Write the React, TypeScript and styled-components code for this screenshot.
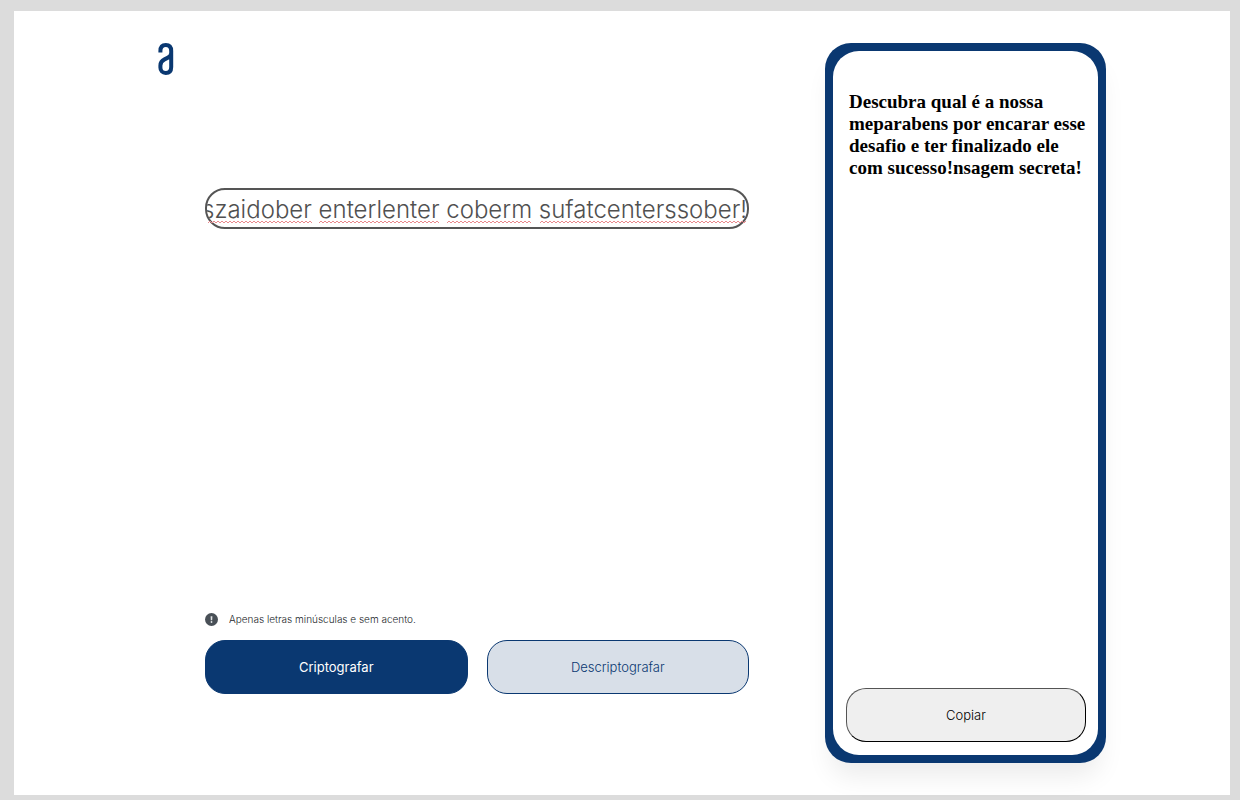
import React, { useLayoutEffect, useRef, useState } from "react";
import styled, { createGlobalStyle } from "styled-components";

const navy = "#0a3871";
const grey = "#495057";

const GlobalStyle = createGlobalStyle`
  *, *::before, *::after { box-sizing: border-box; }
  body {
    margin: 0;
    background: #dcdcdc;
    font-family: Inter, "Liberation Sans", sans-serif;
  }
`;

const Frame = styled.div`
  display: flex;
  min-height: 100vh;
  padding: 11px 10px 5px 14px;
`;

const Page = styled.div`
  flex: 1;
  display: flex;
  align-items: stretch;
  padding: 32px 124px 32px 144px;
  background: #fff;
`;

const LogoLink = styled.a`
  flex: none;
  width: 16px;
  height: 32px;
  margin-right: 31px;
  svg { display: block; }
`;

const Editor = styled.main`
  flex: 1;
  min-width: 0;
  display: flex;
  flex-direction: column;
  justify-content: space-between;
  margin-right: 76px;
  padding: 145px 0 69px;
`;

const Field = styled.div`
  position: relative;
`;

const MessageInput = styled.input`
  display: block;
  width: 100%;
  height: 41px;
  padding: 1px 0 0;
  border: 2px solid #555;
  border-radius: 20px;
  background: #fff;
  color: #505050;
  font-family: Inter, "Liberation Sans", sans-serif;
  font-size: 24px;
  font-weight: 300;
  outline: none;
`;

const SpellMarks = styled.svg`
  position: absolute;
  right: 0;
  bottom: 5px;
  pointer-events: none;
`;

const Notice = styled.p`
  display: flex;
  align-items: center;
  gap: 11px;
  margin: 0 0 14px;
  color: #212529;
  font-size: 10px;
  font-weight: 300;
  line-height: 13px;
`;

const Actions = styled.div`
  display: flex;
  gap: 19px;
`;

const Button = styled.button<{ $variant: "primary" | "secondary" | "copy" }>`
  flex: ${(p) => (p.$variant === "copy" ? "none" : "1")};
  height: 54px;
  padding: 0;
  border-radius: 20px;
  border: ${(p) => (p.$variant === "copy" ? "1px outset #000" : `1px solid ${navy}`)};
  background: ${(p) => ({ primary: navy, secondary: "#d8dfe8", copy: "#efefef" })[p.$variant]};
  color: ${(p) => ({ primary: "#fff", secondary: navy, copy: "#000" })[p.$variant]};
  font-family: Inter, "Liberation Sans", sans-serif;
  font-size: 13px;
  font-weight: ${(p) => (p.$variant === "primary" ? 400 : 300)};
  cursor: pointer;
`;

const Panel = styled.aside`
  flex: none;
  width: 281px;
  min-height: 720px;
  display: flex;
  align-self: flex-start;
  padding: 8px;
  border-radius: 26px;
  background: ${navy};
  box-shadow: 0 19px 26px -6px rgba(0, 0, 0, 0.08);
`;

const PanelBody = styled.div`
  flex: 1;
  display: flex;
  flex-direction: column;
  justify-content: space-between;
  padding: 40px 12px 13px 13px;
  border-radius: 26px;
  background: #fff;
`;

const Result = styled.h2`
  margin: 0 -4px 0 3px;
  color: #000;
  font-family: "Liberation Serif", "Times New Roman", serif;
  font-size: 19px;
  font-weight: 700;
  line-height: 22px;
`;

const encrypted =
  "pairaibenterns poberr enterncairair enterssenter dentersaifimesober enter tenterr fimesnailimeszaidober enterlenter coberm sufatcenterssober!";

const marks: [number, number][] = [[3, 107], [114, 235], [242, 327], [335, 541]];

const zigzag = ([from, to]: [number, number]) => {
  let d = `M${from} 3`;
  for (let x = from + 2, up = true; x <= to; x += 2, up = !up) d += `L${x} ${up ? 1 : 3}`;
  return d;
};

export default function App() {
  const [text, setText] = useState(encrypted);
  const input = useRef<HTMLInputElement>(null);

  useLayoutEffect(() => {
    if (input.current) input.current.scrollLeft = input.current.scrollWidth;
  }, []);

  return (
    <>
      <GlobalStyle />
      <Frame>
        <Page>
          <LogoLink href="#" aria-label="Alura">
            <svg width="16" height="32" viewBox="0 0 16 32" fill="none" stroke={navy} strokeWidth="4">
              <path d="M2.4 9.6V8C2.4 4.2 4.4 2 7.8 2S13.2 4.2 13.2 8V24C13.2 27.8 11.2 30 7.8 30S2.4 27.8 2.4 24.5V22.5C2.4 19.5 4 17.6 6.5 16.4L9.5 14.9C12 13.7 13.2 12.5 13.2 10" />
            </svg>
          </LogoLink>
          <Editor>
            <Field>
              <MessageInput
                ref={input}
                aria-label="Mensagem"
                value={text}
                onChange={(e) => setText(e.target.value)}
                spellCheck={false}
              />
              {text === encrypted && (
                <SpellMarks width="544" height="4" fill="none" stroke="#e98a8e" aria-hidden="true">
                  {marks.map((m) => (
                    <path key={m[0]} d={zigzag(m)} />
                  ))}
                </SpellMarks>
              )}
            </Field>
            <div>
              <Notice>
                <svg width="13" height="13" viewBox="0 0 13 13" aria-hidden="true">
                  <circle cx="6.5" cy="6.5" r="6.5" fill={grey} />
                  <path d="M5.6 3.2h1.8l-.2 4H5.8z" fill="#e4e6e8" />
                  <circle cx="6.5" cy="9" r=".9" fill="#e4e6e8" />
                </svg>
                Apenas letras minúsculas e sem acento.
              </Notice>
              <Actions>
                <Button type="button" $variant="primary">Criptografar</Button>
                <Button type="button" $variant="secondary">Descriptografar</Button>
              </Actions>
            </div>
          </Editor>
          <Panel>
            <PanelBody>
              <Result>
                Descubra qual é a nossa meparabens por encarar esse desafio e ter finalizado ele com sucesso!nsagem secreta!
              </Result>
              <Button type="button" $variant="copy">Copiar</Button>
            </PanelBody>
          </Panel>
        </Page>
      </Frame>
    </>
  );
}
